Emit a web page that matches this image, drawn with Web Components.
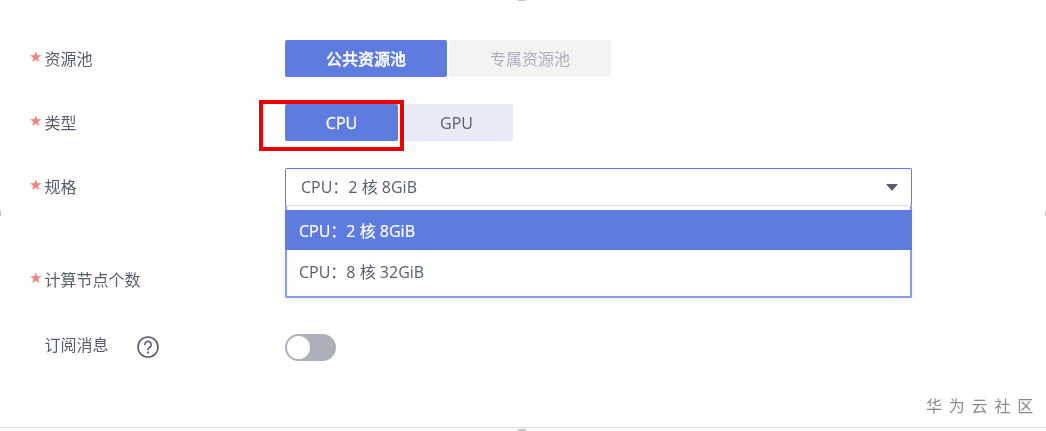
<!DOCTYPE html>
<html lang="zh">
<head>
<meta charset="utf-8">
<title>资源池</title>
<style>
  html, body { margin: 0; background: #fff; }
  body { font-family: "Open Sans", "Noto Sans CJK SC", sans-serif; color: #575d6c; overflow: hidden; }
</style>
</head>
<body>
<spec-page>
  <form-row label="资源池" required>
    <seg-group width="162" options="公共资源池,专属资源池" disabled-rest></seg-group>
  </form-row>
  <form-row label="类型" required>
    <mark-box><seg-group width="113" options="CPU,GPU"></seg-group></mark-box>
  </form-row>
  <form-row label="规格" required extra="29">
    <spec-select value="CPU：2 核 8GiB" options="CPU：2 核 8GiB,CPU：8 核 32GiB"></spec-select>
  </form-row>
  <form-row label="计算节点个数" required extra="1"></form-row>
  <form-row label="订阅消息" help>
    <spec-switch></spec-switch>
  </form-row>
</spec-page>

<script>
class SpecPage extends HTMLElement {
  constructor() {
    super();
    this.attachShadow({ mode: 'open' }).innerHTML = `
      <style>
        :host { display: block; position: relative; box-sizing: border-box; width: 1046px; height: 431px; filter: blur(.35px); }
        .form { display: flex; flex-direction: column; gap: 27px; padding: 40px 0 0 29px; }
        .line { position: absolute; left: 0; right: 0; top: 427px; height: 1px; background: #dcdcdc; }
        .brand { position: absolute; left: 926px; top: 394px; font: 16px/22px "Noto Sans CJK SC", sans-serif; letter-spacing: 6.8px; color: #8b8b8b; white-space: nowrap; }
        .handle { position: absolute; background: #c4c4c4; }
        .t { left: 518px; top: 0; width: 8px; height: 1px; }
        .b { left: 518px; top: 429px; width: 8px; height: 2px; }
        .l { left: 0; top: 211px; width: 1px; height: 5px; }
        .r { left: 1045px; top: 211px; width: 1px; height: 5px; }
      </style>
      <div class="form"><slot></slot></div>
      <div class="brand">华为云社区</div>
      <div class="line"></div>
      <i class="handle t"></i><i class="handle b"></i><i class="handle l"></i><i class="handle r"></i>
    `;
  }
}

class FormRow extends HTMLElement {
  constructor() {
    super();
    const required = this.hasAttribute('required');
    const help = this.hasAttribute('help');
    this.attachShadow({ mode: 'open' }).innerHTML = `
      <style>
        :host { display: grid; grid-template-columns: 256px 1fr; min-height: 37px; align-items: start; }
        .label { display: flex; align-items: center; height: 35px; font-size: 16px; color: #575d6c; }
        .star { width: 15.5px; color: #f6807a; font: 15px/35px "DejaVu Sans", sans-serif; }
        .help { margin: 7px 0 0 28px; display: block; }
      </style>
      <div class="label">
        <span class="star">${required ? '★' : ''}</span>
        <span>${this.getAttribute('label')}</span>
        ${help ? `<svg class="help" width="22" height="22" viewBox="0 0 22 22" fill="none" stroke="#575d6c" stroke-width="1.6" stroke-linecap="round">
          <circle cx="11" cy="11" r="10"/>
          <path d="M7.8 8.6a3.2 3.2 0 1 1 4.9 2.7c-1.1.7-1.7 1.2-1.7 2.5"/>
          <circle cx="11" cy="16.6" r=".4" fill="#575d6c"/>
        </svg>` : ''}
      </div>
      <div class="body"><slot></slot></div>
    `;
    if (this.hasAttribute('extra')) this.style.paddingBottom = this.getAttribute('extra') + 'px';
  }
}

class SegGroup extends HTMLElement {
  constructor() {
    super();
    const width = this.getAttribute('width');
    const rest = this.hasAttribute('disabled-rest') ? 'off' : 'idle';
    const items = this.getAttribute('options').split(',');
    this.attachShadow({ mode: 'open' }).innerHTML = `
      <style>
        :host { display: inline-flex; gap: 2px; vertical-align: top; }
        button { all: unset; box-sizing: border-box; width: ${width}px; height: 37px; text-align: center; font: 16px/39px "Open Sans", "Noto Sans CJK SC", sans-serif; border-radius: 2px; }
        .on { background: #5e7ce0; color: #fff; font-weight: 500; -webkit-text-stroke: .3px #fff; }
        .idle { background: #e8ebf7; color: #575d6c; }
        .off { background: #f3f3f3; color: #adb0b8; }
      </style>
      ${items.map((t, i) => `<button class="${i === 0 ? 'on' : rest}">${t}</button>`).join('')}
    `;
  }
}

class MarkBox extends HTMLElement {
  constructor() {
    super();
    this.attachShadow({ mode: 'open' }).innerHTML = `
      <style>
        :host { display: block; position: relative; }
        .mark { position: absolute; left: -26px; top: -4px; width: 145px; height: 51px; box-sizing: border-box; border: 4px solid #ee0000; pointer-events: none; }
      </style>
      <slot></slot><div class="mark"></div>
    `;
  }
}

class SpecSelect extends HTMLElement {
  constructor() {
    super();
    const options = this.getAttribute('options').split(',');
    this.attachShadow({ mode: 'open' }).innerHTML = `
      <style>
        :host { display: block; position: relative; width: 627px; font-size: 16px; color: #575d6c; }
        .box { box-sizing: border-box; height: 37px; border: 1px solid #5e7ce0; border-bottom: 0; border-radius: 2px 2px 0 0; padding-left: 15px; line-height: 36px; display: flex; justify-content: space-between; }
        .caret { width: 0; height: 0; margin: 15px 13px 0 0; border: 6px solid transparent; border-top: 7px solid #575d6c; border-bottom: 0; }
        .menu { position: absolute; left: 0; right: 0; top: 37px; box-sizing: border-box; height: 93px; padding-top: 4px; background: #fff; border: 2px solid #8a9de6; border-top: 1px solid #dfe1e6; border-radius: 0 0 2px 2px; box-shadow: 0 2px 6px rgba(0,0,0,.08); }
        .opt { padding-left: 12px; height: 40px; line-height: 42px; }
        .opt + .opt { height: 46px; line-height: 44px; }
        .cur { background: #5e7ce0; color: #fff; margin: 0 -2px; padding-left: 14px; -webkit-text-stroke: .2px #fff; }
      </style>
      <div class="box"><span>${this.getAttribute('value')}</span><i class="caret"></i></div>
      <div class="menu">
        ${options.map((t, i) => `<div class="opt ${i === 0 ? 'cur' : ''}">${t}</div>`).join('')}
      </div>
    `;
  }
}

class SpecSwitch extends HTMLElement {
  constructor() {
    super();
    this.attachShadow({ mode: 'open' }).innerHTML = `
      <style>
        :host { display: block; box-sizing: border-box; width: 51px; height: 27px; margin-top: 8px; padding: 2px; border-radius: 14px; background: #adb0b8; }
        i { display: block; width: 23px; height: 23px; border-radius: 50%; background: #fff; }
      </style>
      <i></i>
    `;
  }
}

customElements.define('spec-page', SpecPage);
customElements.define('form-row', FormRow);
customElements.define('seg-group', SegGroup);
customElements.define('mark-box', MarkBox);
customElements.define('spec-select', SpecSelect);
customElements.define('spec-switch', SpecSwitch);
</script>
</body>
</html>
